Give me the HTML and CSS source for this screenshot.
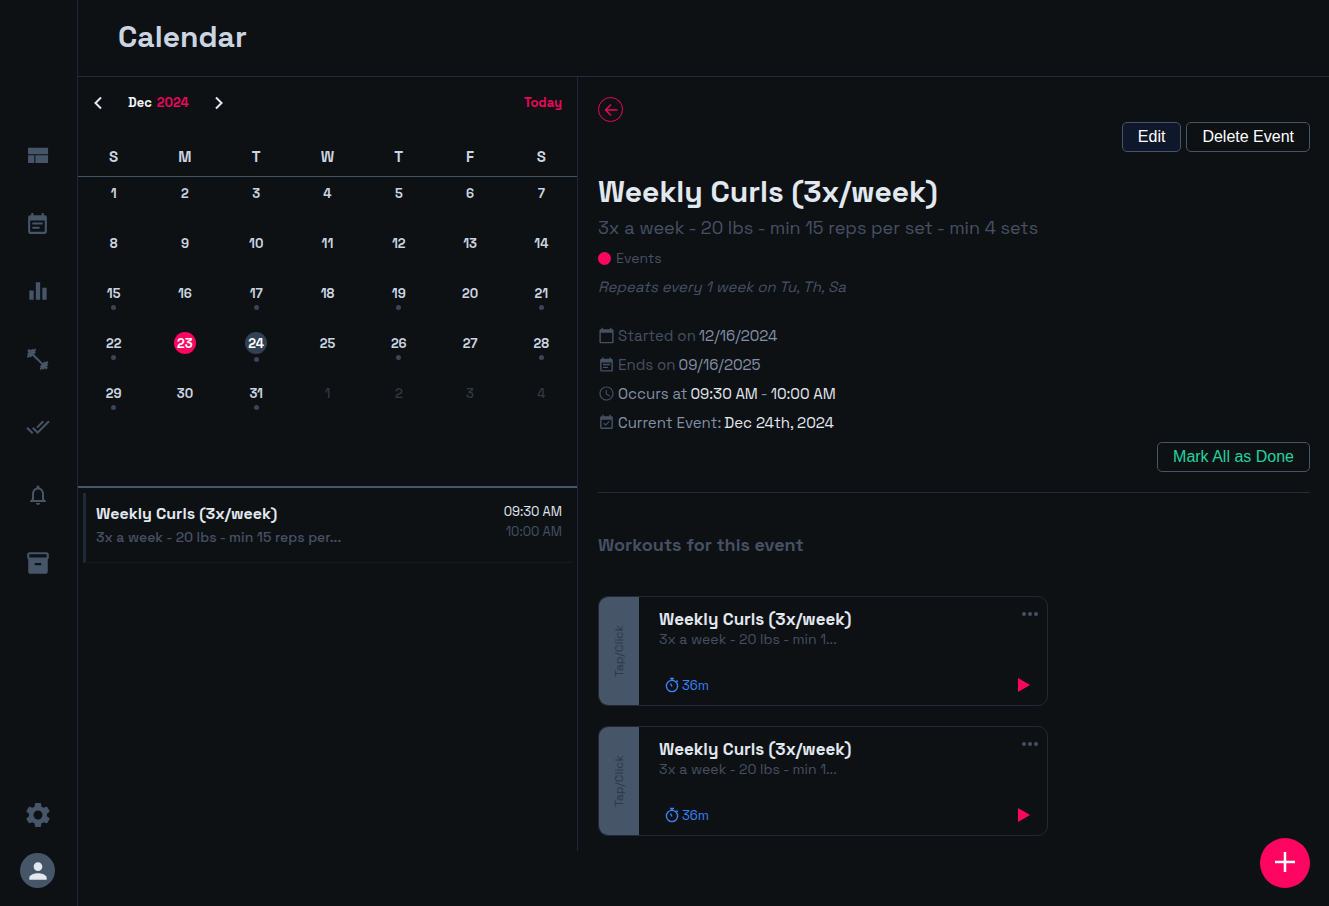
FILE: index.html
```html
<!DOCTYPE html>
<html lang="en">
<head>
<meta charset="utf-8">
<title>Calendar</title>
<link rel="stylesheet" href="styles.css">
</head>
<body>
<div class="app">
  <nav class="sidebar">
    <div class="nav-main">
      <a class="nav-item"><svg width="26" height="26" viewBox="0 0 24 24"><path d="M2.800 5.300h18.500v6H2.800zM2.800 12.300h5.800v7H2.800zM9.600 12.300h11.700v7H9.600z"/></svg></a>
      <a class="nav-item"><svg width="25" height="25" viewBox="0 0 24 24"><path d="M19 4h-1V2h-2v2H8V2H6v2H5c-1.110 0-1.990.9-1.990 2L3 20c0 1.100.89 2 2 2h14c1.100 0 2-.9 2-2V6c0-1.100-.9-2-2-2zm0 16H5V9h14v11zM7 11h10v2H7zM7 15h7v2H7z"/></svg></a>
      <a class="nav-item"><svg width="26" height="26" viewBox="0 0 24 24"><path d="M4 11.500h4V20H4zM10 4h4v16h-4zM16 9h4v11h-4z"/></svg></a>
      <a class="nav-item"><svg width="24" height="24" viewBox="0 0 24 24"><path d="m3.200 1.800 1.500 1.500L6.500 1.800l1 1L9.200 1.500l1.200 1.200-1.500 1.600 1 1-1.900 1.900L17 16.200l1.900-1.900 1 1 1.400-1.200 1.200 1.300-1.300 1.500 1 1-1.500 1.500 1.200 1.300-1.700 1.700-1.300-1.200-1.500 1.500-1-1-1.500 1.300-1.300-1.200 1.200-1.400-1-1 1.800-1.900L6.400 8.700l-1.900 1.900-1-1L2 10.900.8 9.700 2 8.200l-1-1 1.500-1.600L1.300 3.800z"/></svg></a>
      <a class="nav-item"><svg width="24" height="24" viewBox="0 0 24 24"><path d="m18 7-1.410-1.410-6.340 6.340 1.410 1.410L18 7zm4.240-1.410L11.660 16.170 7.480 12l-1.410 1.410L11.660 19l12-12-1.420-1.410zM.41 13.410 6 19l1.410-1.410L1.830 12 .41 13.410z"/></svg></a>
      <a class="nav-item"><svg width="24" height="24" viewBox="0 0 24 24"><path d="M12 22c1.100 0 2-.9 2-2h-4c0 1.100.9 2 2 2zm6-6v-5c0-3.070-1.630-5.640-4.500-6.320V4c0-.83-.67-1.500-1.500-1.500s-1.500.67-1.500 1.500v.68C7.640 5.360 6 7.920 6 11v5l-2 2v1h16v-1l-2-2zm-2 1H8v-6c0-2.480 1.510-4.500 4-4.500s4 2.020 4 4.500v6z"/></svg></a>
      <a class="nav-item"><svg width="26" height="26" viewBox="0 0 24 24"><path d="M20 2H4c-1 0-2 .9-2 2v3.010c0 .72.430 1.340 1 1.690V20c0 1.100 1.100 2 2 2h14c.9 0 2-.9 2-2V8.700c.57-.35 1-.97 1-1.690V4c0-1.100-1-2-2-2zm-5 12H9v-2h6v2zm5-7H4V4h16v3z"/></svg></a>
    </div>
    <div class="nav-foot">
      <a class="gear"><svg width="30" height="30" viewBox="0 0 24 24"><path d="M19.140 12.940c.04-.3.060-.61.060-.94 0-.32-.02-.64-.07-.94l2.030-1.580a.49.490 0 0 0 .12-.61l-1.920-3.320a.488.488 0 0 0-.59-.22l-2.390.96c-.5-.38-1.030-.7-1.620-.94l-.36-2.540a.484.484 0 0 0-.48-.41h-3.840c-.24 0-.43.170-.47.410l-.36 2.540c-.59.240-1.130.570-1.620.94l-2.390-.96c-.22-.08-.47 0-.59.220L2.740 8.870c-.12.210-.08.470.12.610l2.030 1.580c-.05.3-.09.630-.09.940s.02.640.07.940l-2.030 1.580a.49.490 0 0 0-.12.610l1.920 3.320c.12.220.37.290.59.220l2.390-.96c.5.380 1.030.7 1.620.94l.36 2.540c.05.240.24.410.48.410h3.840c.24 0 .44-.17.470-.41l.36-2.540c.59-.24 1.130-.56 1.620-.94l2.390.96c.22.080.47 0 .59-.22l1.920-3.320c.12-.22.070-.47-.12-.61l-2.010-1.580zM12 15.600A3.610 3.610 0 0 1 8.400 12c0-1.980 1.620-3.600 3.600-3.600s3.600 1.620 3.600 3.600-1.620 3.600-3.600 3.600z"/></svg></a>
      <a class="avatar"><svg width="26" height="26" viewBox="0 0 24 24"><path d="M12 12c2.210 0 4-1.790 4-4s-1.790-4-4-4-4 1.790-4 4 1.790 4 4 4zm0 2c-2.670 0-8 1.340-8 4v2h16v-2c0-2.660-5.330-4-8-4z"/></svg></a>
    </div>
  </nav>
  <div class="page">
    <header class="topbar"><h1>Calendar</h1></header>
    <div class="panes">
      <section class="calendar">
        <div class="month-bar">
          <svg width="20" height="20" viewBox="0 0 20 20"><path d="m13 4.500-5.500 5.500 5.500 5.500"/></svg>
          <span class="month"><b>Dec</b><b class="pink">2024</b></span>
          <svg width="20" height="20" viewBox="0 0 20 20"><path d="m7 4.500 5.500 5.500L7 15.500"/></svg>
          <b class="pink today">Today</b>
        </div>
        <div class="weekdays"><span>S</span><span>M</span><span>T</span><span>W</span><span>T</span><span>F</span><span>S</span></div>
        <div class="dates">
          <i>1</i><i>2</i><i>3</i><i>4</i><i>5</i><i>6</i><i>7</i>
          <i>8</i><i>9</i><i>10</i><i>11</i><i>12</i><i>13</i><i>14</i>
          <i class="dot">15</i><i>16</i><i class="dot">17</i><i>18</i><i class="dot">19</i><i>20</i><i class="dot">21</i>
          <i class="dot">22</i><i class="now"><em>23</em></i><i class="dot sel"><em>24</em></i><i>25</i><i class="dot">26</i><i>27</i><i class="dot">28</i>
          <i class="dot">29</i><i>30</i><i class="dot">31</i><i class="off">1</i><i class="off">2</i><i class="off">3</i><i class="off">4</i>
        </div>
        <div class="agenda">
          <article class="agenda-item">
            <div><h3>Weekly Curls (3x/week)</h3><p>3x a week - 20 lbs - min 15 reps per...</p></div>
            <div class="times"><span>09:30 AM</span><span>10:00 AM</span></div>
          </article>
        </div>
      </section>
      <main class="detail">
        <a class="back"><svg width="25" height="25" viewBox="0 0 25 25"><circle cx="12.500" cy="12.500" r="12"/><path d="M19.500 13H7.500M13 7.500 7.500 13l5.500 5.500"/></svg></a>
        <div class="actions"><button class="btn fill">Edit</button><button class="btn">Delete Event</button></div>
        <h2>Weekly Curls (3x/week)</h2>
        <p class="desc">3x a week - 20 lbs - min 15 reps per set - min 4 sets</p>
        <div class="tag"><span class="bullet"></span><span>Events</span></div>
        <p class="repeat">Repeats every 1 week on Tu, Th, Sa</p>
        <ul class="facts">
          <li><svg width="17" height="17" viewBox="0 0 24 24"><path d="M20 3h-1V1h-2v2H7V1H5v2H4c-1.100 0-2 .9-2 2v16c0 1.100.9 2 2 2h16c1.100 0 2-.9 2-2V5c0-1.100-.9-2-2-2zm0 18H4V8h16v13z"/></svg><span>Started on</span><span class="mid">12/16/2024</span></li>
          <li><svg width="17" height="17" viewBox="0 0 24 24"><path d="M19 4h-1V2h-2v2H8V2H6v2H5c-1.110 0-1.990.9-1.990 2L3 20c0 1.100.89 2 2 2h14c1.100 0 2-.9 2-2V6c0-1.100-.9-2-2-2zm0 16H5V9h14v11zM7 11h10v2H7zM7 15h7v2H7z"/></svg><span>Ends on</span><span class="mid">09/16/2025</span></li>
          <li><svg width="17" height="17" viewBox="0 0 24 24"><path d="M11.990 2C6.470 2 2 6.480 2 12s4.470 10 9.990 10C17.520 22 22 17.520 22 12S17.520 2 11.990 2zM12 20.300c-4.600 0-8.300-3.700-8.300-8.300S7.400 3.700 12 3.700s8.300 3.700 8.300 8.300-3.700 8.300-8.300 8.300zM12.500 7H11v6l5.250 3.150.75-1.230-4.500-2.670z"/></svg><span class="mid">Occurs at</span><span class="hi">09:30 AM</span><span class="mid">-</span><span class="hi">10:00 AM</span></li>
          <li><svg width="17" height="17" viewBox="0 0 24 24"><path d="M19 3h-1V1h-2v2H8V1H6v2H5c-1.110 0-2 .9-2 2v14c0 1.100.89 2 2 2h14c1.100 0 2-.9 2-2V5c0-1.100-.9-2-2-2zm0 16H5V8h14v11zM16.500 11l-1.100-1.100-4.600 4.600-2-2-1.100 1.100 3.100 3.100z"/></svg><span class="mid">Current Event:</span><span class="hi">Dec 24th, 2024</span></li>
        </ul>
        <div class="done"><button class="btn green">Mark All as Done</button></div>
        <h4>Workouts for this event</h4>
        <article class="card">
          <div class="tap"><span>Tap/Click</span></div>
          <div class="card-body"><h3>Weekly Curls (3x/week)</h3><p>3x a week - 20 lbs - min 1...</p>
            <div class="timer"><svg width="16" height="16" viewBox="0 0 16 16"><circle cx="8" cy="9" r="5.600"/><path d="M6 1.500h4M8 1.500v2M12.500 3.500l1.300 1.300M8 9.500 6.500 6.500"/></svg><span>36m</span></div></div>
          <div class="card-side"><svg width="18" height="6" viewBox="0 0 18 6"><circle cx="3" cy="3" r="2"/><circle cx="9" cy="3" r="2"/><circle cx="15" cy="3" r="2"/></svg><svg class="play" width="14" height="16" viewBox="0 0 14 16"><path d="M1 1v14L13 8z"/></svg></div>
        </article>
        <article class="card">
          <div class="tap"><span>Tap/Click</span></div>
          <div class="card-body"><h3>Weekly Curls (3x/week)</h3><p>3x a week - 20 lbs - min 1...</p>
            <div class="timer"><svg width="16" height="16" viewBox="0 0 16 16"><circle cx="8" cy="9" r="5.600"/><path d="M6 1.500h4M8 1.500v2M12.500 3.500l1.300 1.300M8 9.500 6.500 6.500"/></svg><span>36m</span></div></div>
          <div class="card-side"><svg width="18" height="6" viewBox="0 0 18 6"><circle cx="3" cy="3" r="2"/><circle cx="9" cy="3" r="2"/><circle cx="15" cy="3" r="2"/></svg><svg class="play" width="14" height="16" viewBox="0 0 14 16"><path d="M1 1v14L13 8z"/></svg></div>
        </article>
      </main>
    </div>
  </div>
</div>
<button class="fab" aria-label="Add"><svg width="22" height="22" viewBox="0 0 22 22"><path d="M11 1v20M1 11h20"/></svg></button>
</body>
</html>
```
FILE: styles.css
```css
* { box-sizing: border-box; }
body { margin: 0; height: 906px; overflow: hidden; background: #0d1114; color: #cbd5e1; font-family: "Space Grotesk", Inter, sans-serif; }
h1, h2, h3, h4, p, ul { margin: 0; padding: 0; }
svg { display: block; flex: none; }
.app { display: flex; height: 906px; }
.sidebar { width: 78px; border-right: 1px solid #20263a; display: flex; flex-direction: column; justify-content: space-between; padding: 121px 2px 18px 0; fill: #475569; }
.nav-main, .nav-foot { display: flex; flex-direction: column; align-items: center; }
.nav-item { height: 68px; display: grid; place-items: center; }
.nav-foot { gap: 23px; }
.avatar { width: 35px; height: 35px; border-radius: 50%; background: #475569; fill: #e2e8f0; display: grid; place-items: center; }
.page { flex: 1; }
.topbar { height: 77px; border-bottom: 1px solid #262b3c; padding: 0 40px; }
h1 { font-size: 30px; line-height: 74px; font-weight: 600; }
.panes { display: flex; height: 774px; }
.calendar { width: 500px; border-right: 1px solid #20263a; }
.month-bar { height: 51px; padding: 0 15px 0 10px; display: flex; align-items: center; font-size: 13px; stroke: #e2e8f0; stroke-width: 2; fill: none; color: #f1f5f9; }
.month { display: flex; gap: 5px; width: 61px; margin: 0 20px; }
.pink { color: #e8085c; }
.today { margin-left: auto; }
.weekdays { height: 49px; border-bottom: 1px solid #475063; display: grid; grid-template-columns: repeat(7, 1fr); text-align: center; font-size: 15px; font-weight: 700; line-height: 58px; }
.dates { display: grid; grid-template-columns: repeat(7, 1fr); grid-auto-rows: 50px; height: 309px; }
.dates i { font: 600 13px/20px "Space Grotesk", Inter, sans-serif; display: flex; flex-direction: column; align-items: center; padding-top: 7px; }
.dates em { font-style: normal; width: 22px; height: 22px; line-height: 23px; border-radius: 50%; text-align: center; margin-top: -2px; color: #fff; background: #ff0562; }
.dates .sel em { background: #334155; }
.dates .dot::after { content: ""; width: 5px; height: 5px; border-radius: 50%; background: #3b4558; margin-top: 1px; }
.dates .sel::after { margin-top: 3px !important; }
.dates .off { color: #333940; font-weight: 500; }
.agenda { border-top: 2px solid #475569; padding: 5px; }
.agenda-item { height: 70px; border-left: 3px solid #1e293b; border-bottom: 1px solid #141a21; padding: 10px 10px 0; display: flex; justify-content: space-between; }
.agenda-item h3 { font-size: 16px; line-height: 22px; color: #e2e8f0; }
.agenda-item p { font-size: 14px; line-height: 24px; color: #475063; font-weight: 500; }
.times { display: flex; flex-direction: column; align-items: flex-end; font-size: 13px; line-height: 20px; color: #475063; margin-top: -1px; }
.times :first-child { color: #e2e8f0; }
.detail { flex: 1; padding: 20px 19px 0 20px; color: #475063; }
.back { display: block; height: 25px; fill: none; stroke: #e8085c; }
.back path { stroke-width: 1.500; }
.actions, .done { display: flex; justify-content: flex-end; gap: 5px; }
.btn { height: 30px; padding: 0 15px 1px; border: 1px solid #475569; border-radius: 5px; background: transparent; color: #fff; font: 16px "Liberation Sans", Arial, sans-serif; }
.btn.fill { background: #0f172a; }
.btn.green { color: #22d3a0; }
h2 { font-size: 30px; line-height: 40px; color: #e2e8f0; margin-top: 20px; }
.desc { font-size: 18px; line-height: 32px; }
.tag { display: flex; align-items: center; gap: 5px; font-size: 14px; line-height: 28px; }
.bullet { width: 13px; height: 13px; border-radius: 50%; background: #ff0562; }
.repeat { font-size: 15px; font-style: italic; line-height: 29px; }
.facts { list-style: none; margin-top: 20px; }
.facts li { display: flex; align-items: center; gap: 3px; height: 29px; font-size: 15px; fill: #475063; }
.mid { color: #8290a6; }
.hi { color: #e2e8f0; font-weight: 450; }
.done { margin-top: 5px; padding-bottom: 20px; border-bottom: 1px solid #262b36; }
h4 { font-size: 18px; line-height: 24px; margin: 40px 0 39px; font-weight: 600; }
.card { width: 450px; height: 110px; margin-bottom: 20px; border: 1px solid #222936; border-radius: 10px; overflow: hidden; display: flex; }
.tap { width: 40px; background: #475569; color: #2c384b; font-size: 12px; display: grid; place-items: center; }
.tap span { writing-mode: vertical-rl; transform: rotate(180deg); }
.card-body { flex: 1; padding: 11px 20px; }
.card-body h3 { font-size: 17px; line-height: 22px; color: #e2e8f0; }
.card-body p { font-size: 14px; line-height: 18px; }
.timer { display: flex; align-items: center; gap: 2px; margin: 28px 0 0 5px; height: 18px; font-size: 13px; color: #3b82f6; stroke: #3b82f6; fill: none; stroke-width: 1.400; }
.timer span { stroke: none; }
.card-side { display: flex; flex-direction: column; justify-content: space-between; align-items: flex-end; padding: 14px 8px 12px 0; fill: #475063; }
.play { fill: #ff0562; margin-right: 8px; }
.fab { position: fixed; right: 19px; bottom: 18px; width: 50px; height: 50px; border: 0; border-radius: 50%; background: #ff0562; display: grid; place-items: center; padding: 0 0 2px; stroke: #fff; stroke-width: 2.500; }
```
